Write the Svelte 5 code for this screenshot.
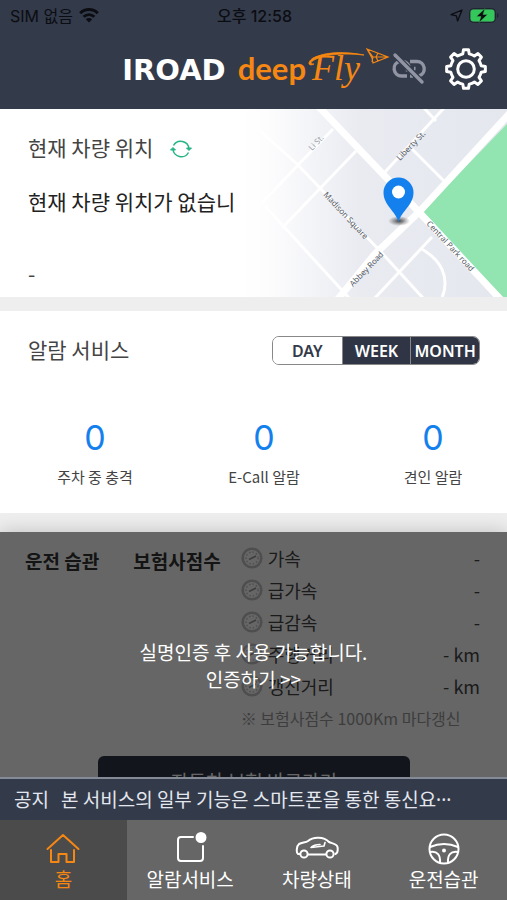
<script>
  let range = $state('DAY');
  const ranges = ['DAY', 'WEEK', 'MONTH'];
  const alarms = [
    { label: '주차 중 충격', count: 0 },
    { label: 'E-Call 알람', count: 0 },
    { label: '견인 알람', count: 0 }
  ];
  const habits = [
    { label: '가속', value: '-' },
    { label: '급가속', value: '-' },
    { label: '급감속', value: '-' },
    { label: '주행거리', value: '- km' },
    { label: '갱신거리', value: '- km' }
  ];
  const tabs = [
    { id: 'home', label: '홈' },
    { id: 'alarm', label: '알람서비스' },
    { id: 'car', label: '차량상태' },
    { id: 'wheel', label: '운전습관' }
  ];

  function gearPath(teeth, outer, inner, c) {
    const step = (Math.PI * 2) / teeth;
    let d = '';
    for (let i = 0; i < teeth; i++) {
      const a = i * step - Math.PI / 2;
      const pts = [
        [inner, a - step * 0.27],
        [outer, a - step * 0.16],
        [outer, a + step * 0.16],
        [inner, a + step * 0.27]
      ].map(([r, t]) => `${(c + r * Math.cos(t)).toFixed(2)} ${(c + r * Math.sin(t)).toFixed(2)}`);
      d += `${i ? `A${inner} ${inner} 0 0 1 ` : 'M'}${pts[0]}L${pts[1]}L${pts[2]}L${pts[3]}`;
    }
    return d + 'Z';
  }
  const gear = gearPath(8, 19.5, 15.5, 22);
</script>

<div class="app">
  <header>
    <div class="status">
      <span class="carrier">SIM 없음
        <svg width="20" height="15" viewBox="0 0 20 15" fill="none" stroke="#0b0d12" aria-hidden="true">
          <path d="M1.2 5.2a12.6 12.6 0 0 1 17.6 0" stroke-width="3" />
          <path d="M4.6 8.8a7.8 7.8 0 0 1 10.8 0" stroke-width="2.8" />
          <path d="M10 14.6 6.8 11.3a4.6 4.6 0 0 1 6.4 0Z" fill="#0b0d12" stroke="none" />
        </svg>
      </span>
      <time>오후 12:58</time>
      <span class="power">
        <svg width="13" height="13" viewBox="0 0 13 13" fill="none" stroke="#0b0d12" stroke-width="1.3" stroke-linejoin="round" aria-hidden="true">
          <path d="M12 1 7.6 12 6.4 6.8 1 5.6Z" />
        </svg>
        <svg width="30" height="15" viewBox="0 0 30 15" aria-hidden="true">
          <rect x=".5" y=".5" width="26" height="14" rx="4" fill="none" stroke="#20242e" />
          <rect x="1.500" y="1.500" width="24" height="12" rx="3" fill="#34c759" />
          <path d="M28 5v5c2-.7 2-4.300 0-5Z" fill="#20242e" />
          <path d="m16 .5-8.500 8h4.500l-2 6 8.500-8h-4.500Z" fill="#0b0d12" stroke="#34c759" stroke-width=".4" />
        </svg>
      </span>
    </div>
    <div class="bar">
      <h1>
        <span class="iroad">IROAD</span>
        <span class="deep">deep</span>
        <span class="fly">Fly
          <svg width="86" height="24" viewBox="0 0 86 24" fill="none" stroke="#f68712" aria-hidden="true">
            <path d="M8 16C2 19 1 14 7 10 19 4 38 3 58 7 38 5 20 6 9 11.500 4 14 4 16 8 16" fill="#f68712" stroke-width=".8" />
            <path d="m61 1 21 8-15 6-1-5Zm0 0 6 8 15 0M61 1l5 9M67 9l-1 5M72 5l-2 4 2 4" stroke-width="1.200" />
          </svg>
        </span>
      </h1>
      <button class="icon" aria-label="연결 끊김">
        <svg width="38" height="34" viewBox="0 0 38 34" fill="none" stroke="#9195a3" stroke-width="3.4" aria-hidden="true">
          <path d="M17 24h-5.500a7.500 7.500 0 0 1-2-14.700M13 9.500c3 .5 5 2.500 6 5" />
          <path d="M20 9.500h7a7.300 7.300 0 0 1 2 14.300M17.500 17v2.500M24 16.500h1.500M20 24h3" />
          <path d="M4.500 2.500 32 30" stroke="#333a4a" stroke-width="6" />
          <path d="M5 3 32 30" stroke-linecap="round" />
        </svg>
      </button>
      <button class="icon" aria-label="설정">
        <svg width="44" height="44" viewBox="0 0 44 44" fill="none" stroke="#fff" stroke-width="3" stroke-linejoin="round" aria-hidden="true">
          <path d={gear} />
          <circle cx="22" cy="22" r="8.300" />
        </svg>
      </button>
    </div>
  </header>

  <main>
    <section class="location">
      <svg class="map" viewBox="0 0 267 188" preserveAspectRatio="xMaxYMid slice" aria-hidden="true">
        <defs>
          <linearGradient id="land" x1="0" x2="1" y1="0" y2="0">
            <stop offset="0" stop-color="#fff" />
            <stop offset=".1" stop-color="#fdfdfe" />
            <stop offset=".45" stop-color="#e9ebf1" />
            <stop offset="1" stop-color="#e4e7ee" />
          </linearGradient>
          <radialGradient id="shade">
            <stop offset="0" stop-color="#333" stop-opacity=".9" />
            <stop offset="1" stop-color="#555" stop-opacity="0" />
          </radialGradient>
        </defs>
        <rect width="267" height="188" fill="url(#land)" />
        <path d="M182 103 267 15v173h-4Z" fill="#92e5b1" />
        <g fill="none" stroke="#fff" stroke-width="3">
          <path d="M78-3 179 103l82 88" stroke-width="7" />
          <path d="M270 4 179 103l-45 43-36 44" stroke-width="7" />
          <path d="M20 22 57 55l84 88 42 46" />
          <path d="M22 94 57 57l36-37" />
          <path d="M25 97 110 190" />
          <path d="M42 119 116 42" />
          <path d="M204-1 145 63" />
          <path d="M184-1 196 12M172 40 205 73M134 190l58-62" />
          <path d="M180 139c22 12 30 30 22 50" />
        </g>
        <g fill="#555b66" font-size="8">
          <text transform="translate(72 42)rotate(-46)" fill="#9a9da5">Li St.</text>
          <text transform="translate(160 52)rotate(-46)">Liberty St.</text>
          <text transform="translate(83 86)rotate(47)">Madison Square</text>
          <text transform="translate(186 115)rotate(47)">Central Park road</text>
          <text transform="translate(113 178)rotate(-46)">Abbey Road</text>
        </g>
        <ellipse cx="159" cy="112" rx="11" ry="5" fill="url(#shade)" />
        <path d="M158.500 113c-3-11-15-17-15-29.500a15 15 0 0 1 30 0c0 12.500-12 18.500-15 29.500Z" fill="#1380ee" />
        <circle cx="158.500" cy="83" r="6.500" fill="#fff" />
      </svg>
      <div class="place">
        <div class="title-row">
          <h2>현재 차량 위치</h2>
          <button class="icon" aria-label="새로고침">
            <svg width="22" height="20" viewBox="0 0 22 20" fill="none" stroke="#25b583" stroke-width="1.500" aria-hidden="true">
              <path d="M3.500 6.500a8.300 8.300 0 0 1 15.500 3.500M18.500 13.500A8.300 8.300 0 0 1 3 10" />
              <path d="m16.500 9 2.500 2.500L21.500 9ZM.5 11 3 8.500 5.500 11Z" fill="#25b583" stroke-width="1" />
            </svg>
          </button>
        </div>
        <p class="address">현재 차량 위치가 없습니다.</p>
        <p class="dash">-</p>
      </div>
    </section>

    <section class="alarm">
      <div class="head">
        <h2>알람 서비스</h2>
        <div class="segments">
          {#each ranges as r}
            <button class:on={range === r} aria-pressed={range === r} onclick={() => (range = r)}>{r}</button>
          {/each}
        </div>
      </div>
      <ul class="counts">
        {#each alarms as a}
          <li><strong>{a.count}</strong><span>{a.label}</span></li>
        {/each}
      </ul>
    </section>

    <section class="habit">
      <div class="cols">
        <h3>운전 습관</h3>
        <h3>보험사점수</h3>
        <div class="stats">
          <dl>
            {#each habits as h}
              <div>
                <dt>
                  <svg width="22" height="22" viewBox="0 0 22 22" fill="none" stroke="#c4c4c4" aria-hidden="true">
                    <circle cx="11" cy="11" r="9.300" stroke-width="2.600" />
                    <circle cx="11" cy="11" r="6" stroke-width="1.500" stroke-dasharray="1.500 2" />
                    <path d="m8 12.500 7-3.500" stroke="#999" stroke-width="1.800" />
                  </svg>
                  {h.label}
                </dt>
                <dd>{h.value}</dd>
              </div>
            {/each}
          </dl>
          <p>※ 보험사점수 1000Km 마다갱신</p>
        </div>
      </div>
      <button class="go">자동차 보험 바로가기</button>
      <a class="lock" href="#verify">실명인증 후 사용 가능합니다.<br />인증하기 &gt;&gt;</a>
    </section>
  </main>

  <footer>
    <p class="notice"><b>공지</b><span>본 서비스의 일부 기능은 스마트폰을 통한 통신요<i>···</i></span></p>
    <nav>
      {#each tabs as t, i}
        <a href="#{t.id}" class:active={i === 0}>
          <svg width="44" height="34" viewBox="0 0 44 34" fill="none" stroke="currentColor" stroke-width="2" stroke-linejoin="round" stroke-linecap="round" aria-hidden="true">
            {#if t.id === 'home'}
              <path d="M6.500 18 22 4l15.500 14M10 19v12h7.500v-8h8v8H33V19" />
            {:else if t.id === 'alarm'}
              <path d="M25 6H13a3 3 0 0 0-3 3v18a3 3 0 0 0 3 3h19a3 3 0 0 0 3-3V15" />
              <circle cx="33" cy="6.500" r="4.500" fill="#fff" stroke="#fff" />
            {:else if t.id === 'car'}
              <path d="M5 23H3c-2-1-1.500-8 1-10 3-1.500 7-1.500 9-3 5-4.500 16-4.500 21 1 3 1.500 8 2 8.500 5 .5 3 0 6-2 7M13 23.500h18" />
              <circle cx="9" cy="23" r="3.600" />
              <circle cx="35" cy="23" r="3.600" />
              <path d="M16 16.500 29 15l1-3.500M16 16.500c2-2 5-3 9-3" stroke-width="1.600" />
            {:else}
              <circle cx="22" cy="18" r="14.500" />
              <path d="M8 16c9-4 19-4 28 0M8.500 21c7-1 10 3 9.500 10.500M35.500 21c-7-1-10 3-9.500 10.500" />
              <circle cx="22" cy="19.500" r="1" fill="currentColor" />
            {/if}
          </svg>
          <span>{t.label}</span>
        </a>
      {/each}
    </nav>
  </footer>
</div>

<style>
  :global(body) {
    margin: 0;
    background: #eee;
  }
  .app {
    display: flex;
    flex-direction: column;
    height: 100vh;
    font-family: 'Noto Sans CJK KR', 'Noto Sans', sans-serif;
    color: #444;
  }
  h1, h2, h3, p, ul, dl, dd {
    margin: 0;
    padding: 0;
    font-weight: 400;
  }
  button {
    margin: 0;
    padding: 0;
    border: 0;
    background: none;
    font: inherit;
    cursor: pointer;
  }
  a {
    text-decoration: none;
  }
  svg {
    flex: none;
  }
  .icon {
    display: flex;
  }

  header {
    background: #333a4a;
  }
  .status {
    display: grid;
    grid-template-columns: 1fr auto 1fr;
    align-items: center;
    height: 30px;
    padding: 0 8px 0 10px;
    font-family: Inter, 'Noto Sans CJK KR', sans-serif;
    font-size: 16px;
    color: #0b0d12;
  }
  .carrier, .power {
    display: flex;
    align-items: center;
    gap: 6px;
  }
  .power {
    justify-content: flex-end;
  }
  time {
    font-weight: 500;
  }
  .bar {
    display: flex;
    align-items: center;
    justify-content: flex-end;
    height: 77px;
    padding: 0 19px 2px 0;
  }
  .bar .icon + .icon {
    margin-left: 16px;
  }
  h1 {
    display: flex;
    align-items: baseline;
    line-height: 40px;
  }
  .iroad {
    font: 700 29px/40px 'DejaVu Sans', sans-serif;
    color: #fff;
  }
  .deep {
    margin-left: 12px;
    font: 700 31px/40px Lato, sans-serif;
    color: #f68712;
  }
  .fly {
    position: relative;
    width: 78px;
    padding-left: 6px;
    font: italic 36px/40px 'Liberation Serif', serif;
    color: #f68712;
  }
  .fly svg {
    position: absolute;
    left: 0;
    top: 0;
  }

  main {
    display: flex;
    flex: 1;
    flex-direction: column;
    gap: 14px;
    min-height: 0;
    overflow: hidden;
  }
  section {
    position: relative;
    flex: none;
    background: #fff;
  }
  h2 {
    font-size: 21px;
    line-height: 32px;
  }
  .map {
    position: absolute;
    top: 0;
    right: 0;
    width: 267px;
    height: 100%;
    font-family: 'Noto Sans', sans-serif;
  }
  .place {
    position: relative;
    padding: 22px 28px 8px;
  }
  .title-row {
    display: flex;
    align-items: center;
    gap: 17px;
  }
  .title-row .icon {
    margin-top: 4px;
  }
  .address {
    width: 207px;
    margin-top: 22px;
    overflow: hidden;
    font-size: 21px;
    line-height: 32px;
    white-space: nowrap;
    color: #222;
  }
  .dash {
    margin-top: 40px;
    font-size: 21px;
    line-height: 32px;
  }

  .alarm {
    padding-bottom: 24px;
  }
  .head {
    display: flex;
    align-items: center;
    justify-content: space-between;
    padding: 21px 27px 0 28px;
  }
  .segments {
    display: grid;
    grid-template-columns: repeat(3, 1fr);
    width: 208px;
    height: 29px;
    box-sizing: border-box;
    margin-top: 4px;
    border: 1px solid #888;
    border-radius: 7px;
    overflow: hidden;
  }
  .segments button {
    background: #2f3545;
    color: #fff;
    font: 600 16px/26px 'Noto Sans', sans-serif;
  }
  .segments button + button {
    border-left: 1px solid #888;
  }
  .segments .on {
    background: #fff;
    color: #333a4a;
  }
  .counts {
    display: flex;
    justify-content: space-between;
    padding: 49px 34px 0 55px;
    list-style: none;
  }
  .counts li {
    display: flex;
    flex-direction: column;
    align-items: center;
    width: 80px;
    white-space: nowrap;
    font-size: 15px;
    line-height: 24px;
  }
  .counts strong {
    margin-bottom: 3px;
    font-family: Inter, sans-serif;
    font-size: 34px;
    font-weight: 400;
    line-height: 48px;
    color: #1380ee;
  }

  .habit {
    margin-top: 5px;
    box-shadow: 0 0 18px rgba(0, 0, 0, 0.2);
  }
  .cols {
    display: flex;
    padding: 10px 27px 0 25px;
  }
  h3 {
    margin-right: 34px;
    padding-top: 3px;
    font-size: 19px;
    font-weight: 700;
    line-height: 32px;
    white-space: nowrap;
    color: #333;
  }
  h3 + h3 {
    margin-right: 20px;
  }
  .stats {
    flex: 1;
    font-size: 18px;
    line-height: 32px;
    white-space: nowrap;
  }
  dl div {
    display: flex;
    justify-content: space-between;
  }
  dt {
    display: flex;
    align-items: center;
    gap: 5px;
  }
  .stats p {
    font-size: 16px;
    color: #999;
  }
  .go {
    display: block;
    width: 312px;
    height: 48px;
    margin: 22px 0 20px 98px;
    border-radius: 6px;
    background: #2f3545;
    color: #fff;
    font-size: 19px;
  }
  .lock {
    position: absolute;
    inset: 0;
    padding-top: 106px;
    background: rgba(0, 0, 0, 0.6);
    color: #fff;
    font-size: 19px;
    line-height: 27px;
    text-align: center;
  }

  .notice {
    display: flex;
    gap: 12px;
    padding: 0 14px 2px;
    border-top: 2px solid #858b96;
    background: #333b4b;
    color: #e4e7ee;
    font-size: 19px;
    line-height: 39px;
    white-space: nowrap;
  }
  .notice b {
    font-weight: 400;
  }
  .notice i {
    font-family: 'Noto Sans', sans-serif;
    font-style: normal;
    line-height: 1;
  }
  nav {
    display: grid;
    grid-template-columns: repeat(4, 1fr);
    background: #666;
  }
  nav a {
    display: flex;
    flex-direction: column;
    align-items: center;
    height: 69px;
    padding-top: 11px;
    color: #fff;
    font-size: 19px;
    line-height: 28px;
  }
  nav .active {
    background: #4b4b4b;
    color: #f68712;
  }
</style>
